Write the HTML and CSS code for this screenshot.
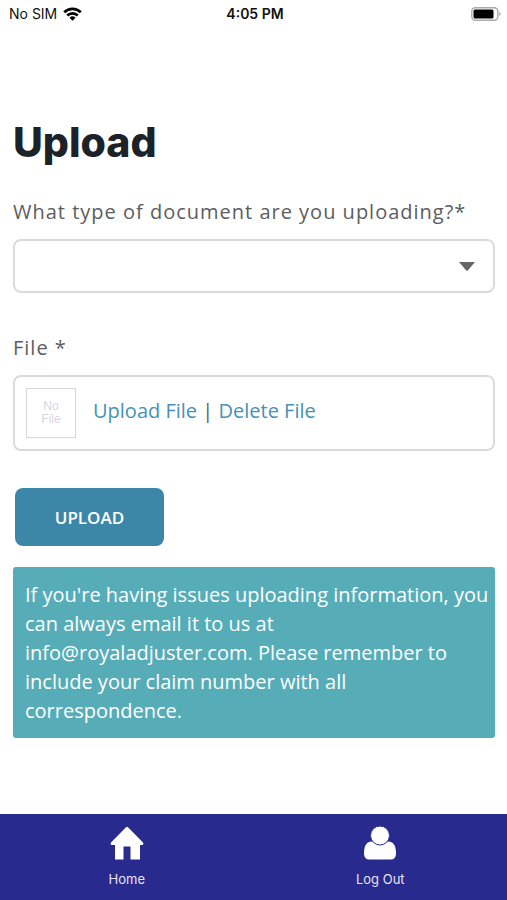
FILE: index.html
```
<!DOCTYPE html>
<html lang="en">
<head>
    <meta charset="utf-8">
    <meta name="viewport" content="width=device-width, initial-scale=1">
    <title>Upload</title>
    <link rel="stylesheet" href="styles.css">
</head>
<body>
    <header class="status-bar">
        <div class="carrier">
            <span>No SIM</span>
            <svg width="19" height="14" viewBox="0 0 19 14" aria-hidden="true">
                <g fill="none" stroke="#000" stroke-width="2.7">
                    <path d="M1.2 5.2a11.8 11.8 0 0 1 16.6 0"/>
                    <path d="M4.2 8.5a7.5 7.5 0 0 1 10.6 0"/>
                </g>
                <path d="M6.5 10.8a4.3 4.3 0 0 1 6 0l-3 3z"/>
            </svg>
        </div>
        <div class="time">4:05 PM</div>
        <div class="battery">
            <svg width="30" height="14" viewBox="0 0 30 14" aria-hidden="true">
                <rect x="0.8" y="0.8" width="26" height="12.4" rx="3.5" fill="#fff" stroke="#aaa" stroke-width="1.4"/>
                <rect x="2.5" y="2.5" width="20" height="9" rx="1.5"/>
                <path d="M28.3 4.8q3 2.2 0 4.4z" fill="#aaa"/>
            </svg>
        </div>
    </header>

    <main class="container">
        <h1>Upload</h1>
        <form>
            <div class="field">
                <label for="documentType">What type of document are you uploading?*</label>
                <div class="select-box">
                    <select id="documentType" required>
                        <option value="" selected></option>
                    </select>
                    <svg class="arrow" width="16" height="9" viewBox="0 0 16 9" aria-hidden="true">
                        <path d="M0 0h16L9 8.2q-1 1-2 0z" fill="#666"/>
                    </svg>
                </div>
            </div>
            <div class="field">
                <div class="label">File *</div>
                <div class="file-box">
                    <div class="no-file">No<br>File</div>
                    <div class="file-links"><a href="#upload">Upload File</a> | <a href="#delete">Delete File</a></div>
                </div>
            </div>
            <button type="button">UPLOAD</button>
        </form>
        <p class="notice">If you're having issues uploading information, you can always email it to us at info@royaladjuster.com. Please remember to include your claim number with all correspondence.</p>
    </main>

    <nav class="tab-bar">
        <a href="#home">
            <svg width="34" height="34" viewBox="0 0 34 34" aria-hidden="true">
                <path d="M16 1.2q1-1 2 0L33 16.5q1 2.5-1 2.5h-2v14.500h-9.500v-13h-7v13H5V19H2q-2 0-1-2.500z" fill="#fff"/>
            </svg>
            <span>Home</span>
        </a>
        <a href="#logout">
            <svg width="34" height="34" viewBox="0 0 34 34" aria-hidden="true">
                <path d="M8 15.500C2.500 16 1 21.500 1 27.500q0 6 5.500 6h21q5.500 0 5.500-6c0-6-1.500-11.500-7-12z" fill="#fff"/>
                <circle cx="17" cy="9.500" r="9.500" fill="#fff" stroke="#292a8e" stroke-width="1"/>
            </svg>
            <span>Log Out</span>
        </a>
    </nav>
</body>
</html>
```

FILE: styles.css
```
* {
    box-sizing: border-box;
}

body {
    display: flex;
    flex-direction: column;
    min-height: 100vh;
    margin: 0;
    background-color: #fff;
    color: #5c5d5f;
    font-family: "Open Sans", sans-serif;
    font-size: 20px;
}

/* Status bar */
.status-bar {
    display: grid;
    grid-template-columns: 1fr auto 1fr;
    align-items: center;
    height: 27px;
    padding: 0 6px 0 9px;
    color: #111;
    font-family: Inter, sans-serif;
    font-size: 14px;
}

.carrier {
    display: flex;
    align-items: center;
    gap: 6px;
}

.time {
    font-weight: 600;
}

.battery {
    display: flex;
    justify-content: flex-end;
}

/* Upload form */
.container {
    flex: 1;
    padding: 85px 12px 24px 13px;
}

h1 {
    margin: 0 0 25px;
    color: #1b2228;
    font-family: Inter, sans-serif;
    font-size: 41px;
    font-weight: 800;
    line-height: 60px;
}

.field {
    margin-bottom: 40px;
}

.field:last-of-type {
    margin-bottom: 37px;
}

label,
.label {
    display: block;
    margin-bottom: 12px;
    line-height: 30px;
    letter-spacing: 1px;
}

.select-box {
    position: relative;
}

select {
    display: block;
    width: 100%;
    height: 54px;
    padding: 0 40px 0 12px;
    border: 2px solid #d9dbdd;
    border-radius: 8px;
    background-color: #fff;
    color: inherit;
    font: inherit;
    appearance: none;
}

.arrow {
    position: absolute;
    top: 23px;
    right: 20px;
    pointer-events: none;
}

.file-box {
    display: flex;
    gap: 17px;
    padding: 11px;
    border: 2px solid #d9dbdd;
    border-radius: 8px;
}

.no-file {
    display: flex;
    align-items: center;
    justify-content: center;
    width: 50px;
    height: 50px;
    border: 1px solid #d5d7d9;
    color: #d5d7d9;
    font-family: "Liberation Sans", sans-serif;
    font-size: 12px;
    line-height: 13px;
    text-align: center;
}

.file-links {
    line-height: 46px;
}

.file-links a {
    color: #4592b3;
    text-decoration: none;
}

button {
    display: block;
    width: 149px;
    height: 58px;
    margin: 0 0 21px 2px;
    border: none;
    border-radius: 8px;
    background-color: #3c87a8;
    color: #fff;
    font-family: inherit;
    font-size: 17px;
    font-weight: 600;
    cursor: pointer;
}

.notice {
    margin: 0;
    padding: 13px 6px 13px 12px;
    border-radius: 3px;
    background-color: #56adb8;
    color: #fff;
    line-height: 29px;
}

/* Bottom navigation */
.tab-bar {
    display: flex;
    height: 86px;
    background-color: #292a8e;
}

.tab-bar a {
    display: flex;
    flex: 1;
    flex-direction: column;
    align-items: center;
    gap: 11px;
    padding-top: 12px;
    color: #e4e4f4;
    font-family: Inter, sans-serif;
    font-size: 13px;
    text-decoration: none;
}
```
